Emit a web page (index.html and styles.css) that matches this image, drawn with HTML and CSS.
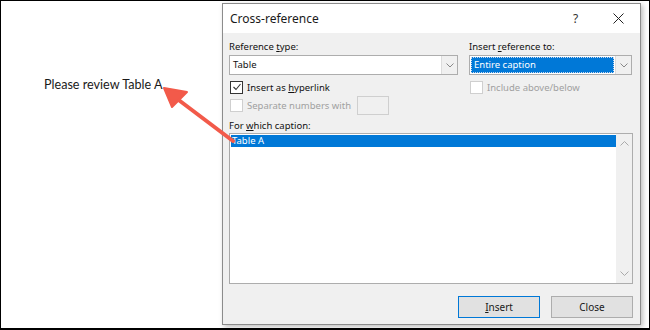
FILE: index.html
```html
<!DOCTYPE html>
<html lang="en">
<head>
<meta charset="UTF-8">
<title>Cross-reference</title>
<link rel="stylesheet" href="styles.css">
</head>
<body>

<div id="frame">

  <!-- ░░ document text ░░ -->
  <div id="doc">
    <p>Please review Table A</p>
  </div>

  <!-- ░░ dialog ░░ -->
  <div id="dialog">
    <div class="titlebar">
      <span class="title">Cross-reference</span>
      <span class="tbtn help">?</span>
      <span class="tbtn close">
        <svg width="11" height="11" viewBox="0 0 11 11"><path d="M.5 .5l10 10M10.5 .5l-10 10" stroke="#222" stroke-width="1"/></svg>
      </span>
    </div>

    <div class="body">
      <div class="cols">
        <div class="col">
          <div class="label">Reference <u>t</u>ype:</div>
          <div class="select">
            <span class="value">Table</span>
            <span class="drop"><svg width="8" height="5" viewBox="0 0 8 5"><path d="M.5 .5l3.5 3.5 3.5-3.5" fill="none" stroke="#888"/></svg></span>
          </div>
          <div class="check first">
            <span class="box on"><svg width="10" height="10" viewBox="0 0 10 10"><path d="M1.5 5l2.5 2.5 4.5-5.5" fill="none" stroke="#333" stroke-width="1.1"/></svg></span>
            <span>Insert as <u>h</u>yperlink</span>
          </div>
          <div class="check off">
            <span class="box"></span>
            <span>Separate numbers with</span>
            <span class="tiny"></span>
          </div>
        </div>

        <div class="col">
          <div class="label">Insert <u>r</u>eference to:</div>
          <div class="select">
            <span class="value hl">Entire caption</span>
            <span class="drop"><svg width="8" height="5" viewBox="0 0 8 5"><path d="M.5 .5l3.5 3.5 3.5-3.5" fill="none" stroke="#888"/></svg></span>
          </div>
          <div class="check first off">
            <span class="box"></span>
            <span>Include above/below</span>
          </div>
        </div>
      </div>

      <div class="label caplabel">For <u>w</u>hich caption:</div>
      <div class="listbox">
        <div class="items">
          <div class="item sel">Table A</div>
        </div>
        <div class="scroll">
          <svg width="9" height="5" viewBox="0 0 9 5"><path d="M.5 4.5l4-4 4 4" fill="none" stroke="#aaa"/></svg>
          <svg width="9" height="5" viewBox="0 0 9 5"><path d="M.5 .5l4 4 4-4" fill="none" stroke="#aaa"/></svg>
        </div>
      </div>

      <div class="buttons">
        <button class="btn default"><u>I</u>nsert</button>
        <button class="btn">Close</button>
      </div>
    </div>
  </div>

  <!-- ░░ pointer arrow ░░ -->
  <svg id="arrow" width="650" height="330" viewBox="0 0 650 330">
    <path d="M233 141 L176 98" stroke="#f25a4a" stroke-width="4" stroke-linecap="round"/>
    <path d="M164 88 L187 92 L172 107 Z" fill="#f25a4a" stroke="#f25a4a" stroke-width="2" stroke-linejoin="round"/>
  </svg>
</div>

</body>
</html>
```

FILE: styles.css
```css
/* ===== global ===== */
html,body{margin:0}
body{background:#fff;font-family:"Noto Sans",sans-serif}

#frame{
  position:relative;width:650px;height:330px;box-sizing:border-box;
  border:1px solid #000;border-bottom-width:2px;
  display:flex;background:#fff;overflow:hidden
}

/* ---------- document ---------- */
#doc{width:221px;flex:none;padding:76px 0 0 43px;box-sizing:border-box}
#doc p{margin:0;font-family:Lato,sans-serif;font-size:12.6px;color:#1a1a1a;white-space:nowrap}

/* ---------- dialog ---------- */
#dialog{
  flex:none;width:419px;height:322px;margin-top:2px;box-sizing:border-box;
  border:1px solid #8c8c8c;background:#f0f0f0;
  box-shadow:2px 2px 5px rgba(0,0,0,.25);
  display:flex;flex-direction:column;font-size:9.5px;color:#111
}
.titlebar{height:29px;flex:none;background:#fff;display:flex;align-items:center;padding:0 0 0 7px}
.title{flex:1;font-size:12px;color:#1a1a1a}
.tbtn{width:43px;text-align:center;font-size:12px;color:#333}
.close{display:flex;justify-content:center;align-items:center}

.body{flex:1;padding:6px 7px 0 6px;display:flex;flex-direction:column}
.cols{display:grid;grid-template-columns:229px 163px;column-gap:11px}
.label{height:15px;line-height:15px;margin-bottom:1px}
.label u,.check u,.btn u{text-decoration:underline;text-underline-offset:1px}

.select{height:20px;box-sizing:border-box;border:1px solid #adadad;background:#fff;display:flex}
.select .value{flex:1;padding:0 3px;line-height:18px}
.select .value.hl{margin:1px;background:#0078d7;color:#fff;line-height:16px;outline:1px dotted #c8d8ee;outline-offset:-1px}
.drop{width:15px;border-left:1px solid #dcdcdc;background:#f0f0f0;display:flex;align-items:center;justify-content:center}

.check{display:flex;align-items:center;height:19px;gap:4px;white-space:nowrap}
.check.first{height:18px;margin-top:3px}
.check .box{width:11px;height:11px;border:1px solid #333;background:#fff;flex:none;display:flex;align-items:center;justify-content:center;margin-left:1px}
.check.off{color:#a0a0a0}
.check.off .box{border-color:#cfcfcf}
.tiny{width:32px;height:19px;box-sizing:border-box;border:1px solid #cfcfcf;background:#f0f0f0;margin-left:2px}

.caplabel{margin:3px 0 0}
.listbox{height:151px;flex:none;box-sizing:border-box;border:1px solid #adadad;border-left-color:#a8a8a8;background:#fff;display:flex}
.items{flex:1;padding:1px 0 0 1px}
.item{height:12px;line-height:12px;padding-left:1px}
.item.sel{background:#0078d7;color:#fff}
.scroll{width:16px;background:#f0f0f0;display:flex;flex-direction:column;justify-content:space-between;align-items:center;padding:7px 0 7px}

.buttons{display:flex;justify-content:flex-end;gap:11px;margin-top:12px}
.btn{width:82px;height:22px;box-sizing:border-box;border:1px solid #adadad;background:#e1e1e1;font:inherit;font-size:10px;color:#1a1a1a;padding:0}
.btn.default{border-color:#0078d7}

/* ---------- overlay arrow ---------- */
#arrow{position:absolute;left:-1px;top:-1px;pointer-events:none}
```
